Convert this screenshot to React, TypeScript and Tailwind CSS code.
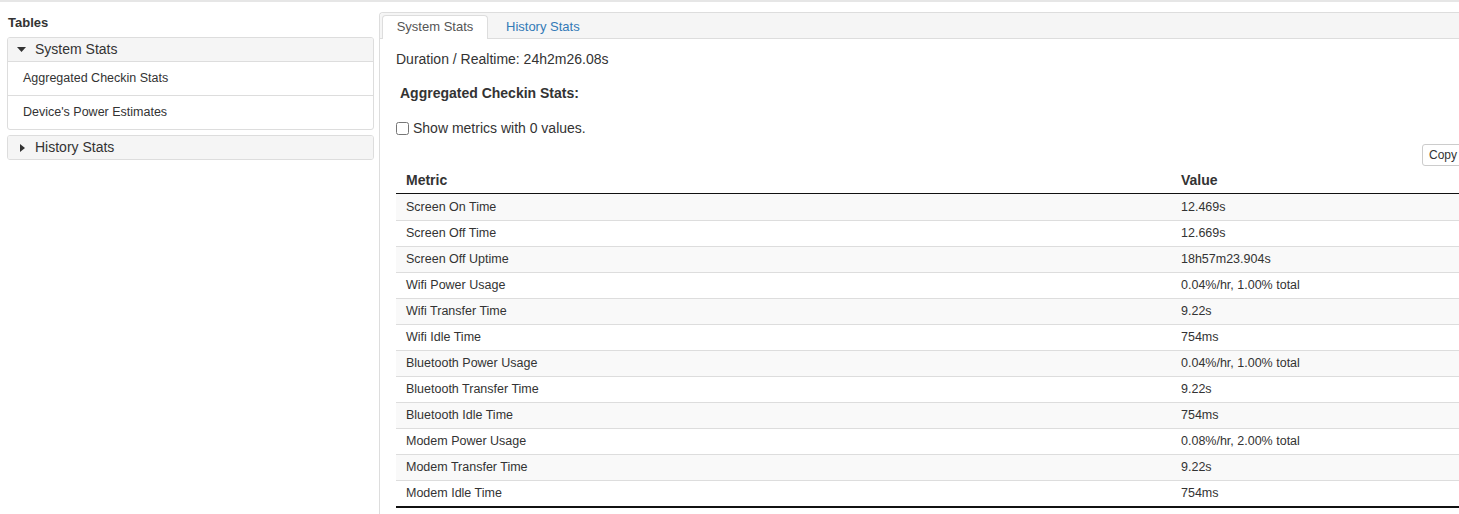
import React from "react";

const rows: [string, string][] = [
  ["Screen On Time", "12.469s"],
  ["Screen Off Time", "12.669s"],
  ["Screen Off Uptime", "18h57m23.904s"],
  ["Wifi Power Usage", "0.04%/hr, 1.00% total"],
  ["Wifi Transfer Time", "9.22s"],
  ["Wifi Idle Time", "754ms"],
  ["Bluetooth Power Usage", "0.04%/hr, 1.00% total"],
  ["Bluetooth Transfer Time", "9.22s"],
  ["Bluetooth Idle Time", "754ms"],
  ["Modem Power Usage", "0.08%/hr, 2.00% total"],
  ["Modem Transfer Time", "9.22s"],
  ["Modem Idle Time", "754ms"],
];

function Down() {
  return (
    <svg width="9" height="5" viewBox="0 0 9 5" className="mr-[9px]">
      <polygon points="0,0 9,0 4.5,5" fill="#333" />
    </svg>
  );
}
function Right() {
  return (
    <svg width="5" height="8" viewBox="0 0 5 8" className="ml-[3px] mr-[10px]">
      <polygon points="0,0 5,4 0,8" fill="#333" />
    </svg>
  );
}

export default function App() {
  return (
    <div
      className="w-[1459px] h-[514px] overflow-hidden bg-white text-[#333]"
      style={{ fontFamily: '"Liberation Sans", Arial, sans-serif' }}
    >
      <div className="h-[2px] bg-[#e6e6e6] w-[1459px]" />
      <div className="flex w-[1490px]">
        {/* Left panel */}
        <div className="w-[379px] shrink-0 pl-[7px] pr-[5px]">
          <div className="pl-[1px] pt-[13px] h-[35px] text-[13px] font-bold leading-[16px]">Tables</div>
          <div className="border border-[#ddd] rounded-[3px] overflow-hidden">
            <div className="h-[24px] bg-[#f5f5f5] border-b border-[#ddd] flex items-center pl-[9px] text-[14px]">
              <Down />
              <span>System Stats</span>
            </div>
            <div className="h-[34px] border-b border-[#ddd] flex items-center pl-[15px] text-[12.5px]">
              Aggregated Checkin Stats
            </div>
            <div className="h-[33px] flex items-center pl-[15px] text-[12.5px]">
              Device's Power Estimates
            </div>
          </div>
          <div className="mt-[5px] border border-[#ddd] rounded-[3px] overflow-hidden">
            <div className="h-[23px] bg-[#f5f5f5] flex items-center pl-[9px] text-[14px]">
              <Right />
              <span>History Stats</span>
            </div>
          </div>
        </div>

        {/* Right panel */}
        <div className="flex-1 mt-[10px] border-l border-t border-[#ddd] rounded-tl-[4px] h-[504px]">
          <div className="h-[26px] bg-[#f5f5f5] border-b border-[#ddd] flex items-end pl-[2px] text-[13px] rounded-tl-[4px]">
            <div className="h-[24px] w-[106px] -mb-px bg-white border border-b-0 border-[#ddd] rounded-t-[4px] flex items-center justify-center pb-[2px] text-[#555]">
              System Stats
            </div>
            <div className="h-[24px] flex items-center pt-[1px] pl-[18px] text-[#337ab7]">History Stats</div>
          </div>
          <div className="pl-[16px] pr-[26px]">
            <div className="mt-[10px] text-[14px] leading-[20px]">Duration / Realtime: 24h2m26.08s</div>
            <div className="mt-[14px] pl-[4px] text-[14px] font-bold leading-[20px]">Aggregated Checkin Stats:</div>
            <label className="mt-[15px] flex items-center text-[14px] leading-[20px]">
              <input type="checkbox" className="m-0 w-[13px] h-[13px] mr-[4px]" />
              <span>Show metrics with 0 values.</span>
            </label>
            <div className="flex justify-end mt-[6px]">
              <button className="h-[22px] px-[6px] border border-[#ccc] rounded-[3px] bg-white text-[12px] text-[#333] leading-[20px]">
                Copy
              </button>
            </div>
            <div className="w-[1068px]">
              <div className="flex h-[28px] pt-[2px] border-b border-[#111] text-[14px] font-bold items-center">
                <div className="w-[775px] pl-[10px]">Metric</div>
                <div className="pl-[10px]">Value</div>
              </div>
              {rows.map(([m, v], i) => (
                <div
                  key={m}
                  className={
                    "flex items-center text-[12.5px] " +
                    (i === 0 ? "h-[26px] " : "h-[26px] border-t border-[#ddd] ") +
                    (i % 2 === 0 ? "bg-[#f9f9f9]" : "bg-white")
                  }
                >
                  <div className="w-[775px] pl-[10px]">{m}</div>
                  <div className="pl-[10px]">{v}</div>
                </div>
              ))}
              <div className="h-[2px] bg-[#111]" />
            </div>
          </div>
        </div>
      </div>
    </div>
  );
}
